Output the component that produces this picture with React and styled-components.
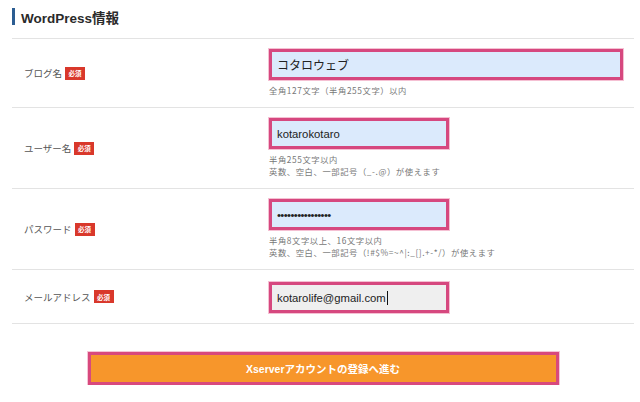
import React from 'react';
import styled, { createGlobalStyle } from 'styled-components';

const Global = createGlobalStyle`
  html, body { margin: 0; padding: 0; background: #fff; }
  body {
    font-family: "Liberation Sans", "Noto Sans CJK JP", sans-serif;
    color: #333;
  }
`;

const Page = styled.div`
  width: 622px;
  padding: 8px 0 0 12px;
`;

const Header = styled.div`
  padding-bottom: 13px;
  border-bottom: 1px solid #e3e3e3;
`;

const Title = styled.h2`
  margin: 0;
  height: 17px;
  border-left: 3px solid #2c5d92;
  padding-left: 6px;
  display: flex;
  align-items: center;
  font-size: 13.5px;
  font-weight: bold;
  color: #2a2a2a;
`;

const Row = styled.div`
  display: grid;
  grid-template-columns: 257px 1fr;
  border-bottom: 1px solid #e3e3e3;
`;

const LabelCell = styled.div`
  display: flex;
  align-items: center;
  padding-left: 12px;
  font-family: "Noto Sans CJK JP", sans-serif;
  font-size: 9.5px;
  color: #555;
`;

const Badge = styled.span`
  display: inline-flex;
  align-items: center;
  justify-content: center;
  margin-left: 3px;
  width: 20px;
  height: 13px;
  background: #d9382b;
  color: #fff;
  font-family: "Noto Sans CJK JP", sans-serif;
  font-size: 6.5px;
  font-weight: bold;
`;

const FieldCell = styled.div`
  padding: ${p => (p.$bare ? '12px 11px 10px 0' : '10px 11px 11px 0')};
`;

const Field = styled.div`
  box-sizing: border-box;
  width: ${p => p.$width}px;
  height: 31px;
  border: 3px solid #d6487f;
  box-shadow: 0 0 0 1px rgba(236, 140, 175, 0.55);
  background: ${p => p.$bg};
  padding: 0 5px;
  display: flex;
  align-items: center;
  font-family: ${p => (p.$jp ? '"Noto Sans CJK JP", sans-serif' : '"Liberation Sans", sans-serif')};
  font-size: ${p => (p.$jp ? '12px' : '11.3px')};
  color: #222;
  letter-spacing: ${p => (p.$dots ? '-0.6px' : '0')};
`;

const Caret = styled.span`
  display: inline-block;
  width: 1px;
  height: 14px;
  background: #111;
  margin-left: 1px;
`;

const Help = styled.div`
  margin-top: 4px;
  font-family: "Noto Sans CJK JP", sans-serif;
  font-size: 8.3px;
  letter-spacing: 0.6px;
  line-height: 12px;
  color: #777;
`;

const ButtonWrap = styled.div`
  display: flex;
  justify-content: center;
  padding-top: 28px;
`;

const Submit = styled.button`
  box-sizing: border-box;
  width: 471px;
  height: 33px;
  background: #f7962b;
  border: 3px solid #d8497d;
  box-shadow: 0 0 0 1px rgba(236, 140, 175, 0.5);
  color: #fff;
  font-family: "Liberation Sans", "Noto Sans CJK JP", sans-serif;
  font-size: 10.5px;
  font-weight: bold;
  cursor: pointer;
`;

const rows = [
  {
    label: 'ブログ名',
    value: 'コタロウェブ',
    jp: true,
    width: 354,
    bg: '#dbeafc',
    help: ['全角127文字（半角255文字）以内'],
  },
  {
    label: 'ユーザー名',
    value: 'kotarokotaro',
    width: 180,
    bg: '#dbeafc',
    help: ['半角255文字以内', '英数、空白、一部記号（_-.@）が使えます'],
  },
  {
    label: 'パスワード',
    value: '••••••••••••••••',
    dots: true,
    width: 180,
    bg: '#dbeafc',
    help: ['半角8文字以上、16文字以内', '英数、空白、一部記号（!#$%=~^|:_[].+-*/）が使えます'],
  },
  {
    label: 'メールアドレス',
    value: 'kotarolife@gmail.com',
    width: 180,
    bg: '#efefef',
    caret: true,
    help: [],
  },
];

export default function App() {
  return (
    <>
      <Global />
      <Page>
        <Header>
          <Title>WordPress情報</Title>
        </Header>
        {rows.map(r => (
          <Row key={r.label}>
            <LabelCell>
              {r.label}
              <Badge>必須</Badge>
            </LabelCell>
            <FieldCell $bare={r.help.length === 0}>
              <Field $width={r.width} $bg={r.bg} $jp={r.jp} $dots={r.dots}>
                {r.value}
                {r.caret && <Caret />}
              </Field>
              {r.help.length > 0 && (
                <Help>
                  {r.help.map(h => (
                    <div key={h}>{h}</div>
                  ))}
                </Help>
              )}
            </FieldCell>
          </Row>
        ))}
        <ButtonWrap>
          <Submit>Xserverアカウントの登録へ進む</Submit>
        </ButtonWrap>
      </Page>
    </>
  );
}
